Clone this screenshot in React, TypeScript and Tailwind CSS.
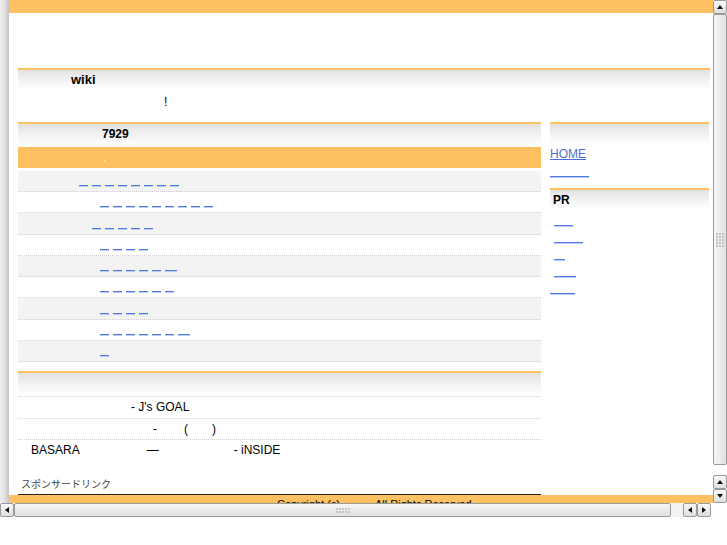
import React from "react";

const ORANGE = "bg-[#ffc062]";

function Segs({ n, last }: { n: number; last?: number }) {
  return (
    <span className="inline-flex gap-[4px] items-end">
      {Array.from({ length: n }).map((_, i) => (
        <span
          key={i}
          className="inline-block h-[1px] bg-[#4f78e0] shadow-[0_1px_0_#bccdf3]"
          style={{ width: i === n - 1 && last ? last : 9 }}
        />
      ))}
    </span>
  );
}

function Line({ w }: { w: number }) {
  return <span className="inline-block h-[1px] bg-[#4f78e0] shadow-[0_1px_0_#bccdf3]" style={{ width: w }} />;
}

function H2({ children, className = "" }: { children?: React.ReactNode; className?: string }) {
  return (
    <div
      className={
        "border-t-2 border-[#ffc062] bg-gradient-to-b from-[#e2e2e2] via-[#f3f3f3] to-white font-bold text-[12px] leading-[18px] text-black " +
        className
      }
    >
      {children}
    </div>
  );
}

function Tri({ dir }: { dir: "up" | "down" | "left" | "right" }) {
  const pts: Record<string, string> = {
    up: "1,5 4,1 7,5",
    down: "1,1 4,5 7,1",
    left: "5,1 1,4 5,7",
    right: "1,1 5,4 1,7",
  };
  const vert = dir === "up" || dir === "down";
  return (
    <svg width={vert ? 8 : 6} height={vert ? 6 : 8} viewBox={vert ? "0 0 8 6" : "0 0 6 8"}>
      <polygon points={pts[dir]} fill="#111" />
    </svg>
  );
}

function Btn({ dir }: { dir: "up" | "down" | "left" | "right" }) {
  return (
    <div className="w-[14px] h-[14px] rounded-[2px] border border-[#9a9a9a] bg-gradient-to-b from-[#fafafa] to-[#dedede] flex items-center justify-center shrink-0">
      <Tri dir={dir} />
    </div>
  );
}

const rows: { pl: number; n: number; last?: number; h: number }[] = [
  { pl: 61, n: 8, h: 21 },
  { pl: 82, n: 9, h: 21 },
  { pl: 74, n: 5, h: 22 },
  { pl: 82, n: 4, h: 21 },
  { pl: 82, n: 6, last: 12, h: 21 },
  { pl: 82, n: 6, h: 21 },
  { pl: 82, n: 4, h: 22 },
  { pl: 82, n: 7, last: 12, h: 21 },
  { pl: 82, n: 1, h: 21 },
];

export default function App() {
  return (
    <div
      className="w-[727px] h-[545px] bg-white overflow-hidden text-black"
      style={{ fontFamily: '"Liberation Sans", Arial, "Noto Sans CJK JP", sans-serif' }}
    >
      <div className="flex h-[503px]">
        {/* left gutter */}
        <div className="w-[9px] shrink-0 bg-gradient-to-r from-[#efefef] via-[#e2e2e2] to-[#c4c4c4]" />

        {/* page */}
        <div className="w-[704px] shrink-0 h-[503px] overflow-hidden flex flex-col">
          <div className={"h-[13px] shrink-0 " + ORANGE} />
          <div className="h-[55px] shrink-0" />

          <div className="ml-[9px] mr-[3px]">
            <H2 className="h-[22px] pl-[53px] leading-[20px] text-[13px]">wiki</H2>
            <div className="mt-[4px] h-[16px] leading-[16px] text-[12px] pl-[146px]">!</div>
          </div>

          <div className="mt-[12px] ml-[9px] mr-[4px] flex gap-[9px] shrink-0">
            {/* left column */}
            <div className="w-[523px] shrink-0">
              <H2 className="h-[25px] pl-[84px] pt-[1px]">7929</H2>
              <div className={"h-[21px] pl-[85px] text-white text-[10px] leading-[21px] " + ORANGE}>.</div>
              <div className="mt-[3px]">
                {rows.map((r, i) => (
                  <div
                    key={i}
                    className={
                      "border-b border-dotted border-[#cfcfcf] flex items-end pb-[5px] " +
                      (i % 2 === 0 ? "bg-[#f3f3f3]" : "bg-white")
                    }
                    style={{ paddingLeft: r.pl, height: r.h }}
                  >
                    <Segs n={r.n} last={r.last} />
                  </div>
                ))}
              </div>

              <H2 className="mt-[9px] h-[25px]" />
              <div className="text-[12px] leading-[21px]">
                <div className="border-t border-dotted border-[#cfcfcf] h-[22px] pl-[113px]">- J's GOAL</div>
                <div className="border-t border-dotted border-[#cfcfcf] h-[21px] flex pl-[135px]">
                  <span>-</span>
                  <span className="ml-[27px]">(</span>
                  <span className="ml-[24px]">)</span>
                </div>
                <div className="border-t border-dotted border-[#cfcfcf] h-[21px] flex pl-[13px]">
                  <span>BASARA</span>
                  <span className="ml-[67px]">—</span>
                  <span className="ml-[75px]">- iNSIDE</span>
                </div>
              </div>
              <div className="mt-[18px] pl-[3px] text-[10px] leading-[14px] text-[#444]">スポンサードリンク</div>
              <div className="mt-[2px] h-[1px] bg-[#222]" />
            </div>

            {/* right column */}
            <div className="w-[159px] shrink-0">
              <H2 className="h-[24px]" />
              <div className="h-[16px] leading-[16px] text-[12px]">
                <span className="text-[#4a6fd4] underline">HOME</span>
              </div>
              <div className="h-[17px] flex items-end pb-[2px]">
                <Line w={39} />
              </div>
              <H2 className="mt-[9px] h-[22px] pl-[3px] pt-[1px]">PR</H2>
              <div className="pt-[2px]">
                {[
                  { pl: 4, w: 19 },
                  { pl: 4, w: 29 },
                  { pl: 4, w: 11 },
                  { pl: 4, w: 22 },
                  { pl: 0, w: 25 },
                ].map((l, i) => (
                  <div key={i} className="h-[17px] flex items-end pb-[3px]" style={{ paddingLeft: l.pl }}>
                    <Line w={l.w} />
                  </div>
                ))}
              </div>
            </div>
          </div>

          {/* footer */}
          <div className={"h-[24px] shrink-0 text-[11px] leading-[14px] pt-[2px] pl-[268px] flex " + ORANGE}>
            <span>Copyright (c)</span>
            <span className="ml-[35px]">All Rights Reserved</span>
          </div>
        </div>

        {/* vertical scrollbar */}
        <div className="w-[14px] shrink-0 flex flex-col bg-[#efefef]">
          <Btn dir="up" />
          <div className="h-[451px] rounded-[2px] border border-[#9a9a9a] bg-gradient-to-r from-[#f6f6f6] to-[#e2e2e2] flex items-center justify-center">
            <div className="grid grid-cols-3 gap-[1px]">
              {Array.from({ length: 15 }).map((_, i) => (
                <span key={i} className="w-[2px] h-[2px] bg-[#c4c4c4]" />
              ))}
            </div>
          </div>
          <div className="h-[10px] bg-white" />
          <Btn dir="up" />
          <Btn dir="down" />
        </div>
      </div>

      {/* horizontal scrollbar */}
      <div className="flex h-[14px]">
        <Btn dir="left" />
        <div className="w-[657px] shrink-0 rounded-[2px] border border-[#9a9a9a] bg-gradient-to-b from-[#f6f6f6] to-[#e0e0e0] flex items-center justify-center">
          <div className="grid grid-cols-5 gap-[1px]">
            {Array.from({ length: 10 }).map((_, i) => (
              <span key={i} className="w-[2px] h-[2px] bg-[#c4c4c4]" />
            ))}
          </div>
        </div>
        <div className="w-[12px] shrink-0 bg-[#f2f2f2]" />
        <Btn dir="left" />
        <Btn dir="right" />
      </div>
    </div>
  );
}
